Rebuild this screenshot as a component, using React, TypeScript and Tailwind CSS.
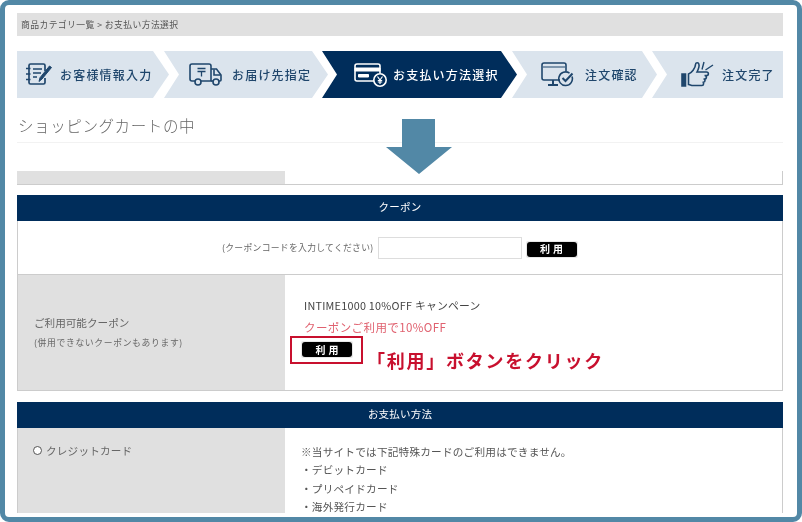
import React from 'react';

const navy = '#002d5b';

const NoteIcon = () => (
  <svg width="28" height="26" viewBox="0 0 28 26" fill="none" stroke="currentColor" strokeWidth="1.7" className="shrink-0">
    <path d="M20 9V3.500a1.500 1.500 0 0 0-1.500-1.500H5.500A1.500 1.500 0 0 0 4 3.500v17A1.500 1.500 0 0 0 5.500 22h13a1.500 1.500 0 0 0 1.500-1.500V16" />
    <path d="M1 6.500h4.500M1 12h4.500M1 17.500h4.500" />
    <path d="M8 7h9M8 11h8M8 15h4" />
    <path d="M26.500 5.500 17 17l-3 2.500 1-3.800L24.500 4z" fill="currentColor" strokeWidth="1" />
  </svg>
);

const TruckIcon = () => (
  <svg width="34" height="24" viewBox="0 0 34 24" fill="none" stroke="currentColor" strokeWidth="1.6" className="shrink-0">
    <path d="M6 18H3a2 2 0 0 1-2-2V3a2 2 0 0 1 2-2h17a2 2 0 0 1 2 2v15H12" />
    <path d="M22 6h5.500l4.500 6v5a1 1 0 0 1-1 1h-1M24 18h-2" />
    <path d="M25 6.500v5.500h6.500" />
    <path d="M8.500 5.500h8M8.500 8.500h8M12.500 8.500v5" strokeWidth="1.300" />
    <circle cx="9" cy="19" r="3" />
    <circle cx="27" cy="19" r="3" />
  </svg>
);

const CardIcon = () => (
  <svg width="34" height="24" viewBox="0 0 34 24" fill="none" stroke="currentColor" strokeWidth="1.600" className="shrink-0">
    <path d="M21 18H3a2 2 0 0 1-2-2V3a2 2 0 0 1 2-2h21a2 2 0 0 1 2 2v7" />
    <path d="M1 5h25v3H1z" fill="currentColor" strokeWidth="1" />
    <path d="M4.500 11.500h10v2.500h-10z" fill="currentColor" strokeWidth="1" />
    <circle cx="26" cy="17" r="6.200" fill={navy} />
    <path d="M23.500 13.500 26 17l2.500-3.500M26 17v4M23.800 17.500h4.400M23.800 19h4.400" strokeWidth="1.200" />
  </svg>
);

const MonitorIcon = () => (
  <svg width="33" height="25" viewBox="0 0 33 25" fill="none" stroke="currentColor" strokeWidth="1.600" className="shrink-0">
    <path d="M19 18H3a2 2 0 0 1-2-2V3a2 2 0 0 1 2-2h20a2 2 0 0 1 2 2v6" />
    <path d="M2 5h22" strokeWidth="1" />
    <path d="M12 18v4M7 23h10" strokeWidth="2" />
    <path d="M31 14.500a6.800 6.800 0 1 1-2.500-3.300" />
    <path d="m21.500 16 3 3 7-7.500" strokeWidth="2" />
  </svg>
);

const ThumbIcon = () => (
  <svg width="33" height="29" viewBox="0 0 33 29" fill="none" stroke="currentColor" strokeWidth="1.600" className="shrink-0">
    <path d="M1 14h3.500v12H1z" fill="currentColor" />
    <path d="M7.500 14c3-1 7-6 7-9.500 0-2 3-2.500 3.500 0 .5 2.200-1 5.500-2 7.500h9.500c2.500 0 2.500 3.500 0 3.500h-2c2.500 0 2.500 3.500 0 3.500h-1c2 0 2 3.200 0 3.200h-1c1.500 0 1.500 3.300-.5 3.300H12c-2 0-3-1-4.500-1z" />
    <path d="M21 9.500 23 2M24.500 10 32 5" strokeWidth="1.400" />
  </svg>
);

const steps = [
  { label: 'お客様情報入力', icon: <NoteIcon />, cls: 'w-[152px] pl-[8px] gap-[7px] [clip-path:polygon(0_0,136px_0,152px_50%,136px_100%,0_100%)]' },
  { label: 'お届け先指定', icon: <TruckIcon />, cls: 'w-[164px] -ml-[5px] pl-[25px] gap-[9px] [clip-path:polygon(0_0,148px_0,164px_50%,148px_100%,0_100%,15px_50%)]' },
  { label: 'お支払い方法選択', icon: <CardIcon />, active: true, cls: 'w-[195px] -ml-[6px] pl-[32px] gap-[5px] [clip-path:polygon(0_0,179px_0,195px_50%,179px_100%,0_100%,15px_50%)]' },
  { label: '注文確認', icon: <MonitorIcon />, cls: 'w-[145px] -ml-[5px] pl-[29px] gap-[11px] [clip-path:polygon(0_0,130px_0,145px_50%,130px_100%,0_100%,15px_50%)]' },
  { label: '注文完了', icon: <ThumbIcon />, cls: 'w-[131px] -ml-[5px] pl-[29px] gap-[8px] [clip-path:polygon(0_0,100%_0,100%_100%,0_100%,15px_50%)]' },
];

const UseButton = () => (
  <button className="block w-[52px] h-[17px] p-px bg-[#e8e8e8] rounded-[2px] shrink-0">
    <span className="flex items-center justify-center w-full h-full bg-black rounded-[3px] text-white text-[10px] font-bold tracking-[3px] leading-none pl-[3px]">利用</span>
  </button>
);

const SectionHead = ({ children }: { children: React.ReactNode }) => (
  <div className="h-[26px] pb-[2px] bg-[#002d5b] flex items-center justify-center text-white text-[10.5px] tracking-[0.2px]">{children}</div>
);

export default function App() {
  return (
    <div className="w-[802px] h-[522px] bg-white overflow-hidden font-['Noto_Sans_CJK_JP','Liberation_Sans',sans-serif]">
      <div className="relative h-full rounded-[9px] border-[5px] border-[#5288a6] pt-[8px] pb-[4px] pl-[12px] pr-[14px] text-[#555]">
        <div className="h-full overflow-hidden blur-[0.3px]">
          <div className="h-[23px] bg-[#e0e0e0] flex items-center pl-[4px] text-[8.8px] tracking-[0.42px] text-[#555]">商品カテゴリ一覧 &gt; お支払い方法選択</div>

          <div className="flex mt-[15px] h-[47px]">
            {steps.map(s => (
              <div
                key={s.label}
                className={`flex items-center shrink-0 ${s.cls} ${s.active ? 'bg-[#002d5b] text-white' : 'bg-[#dbe4ed] text-[#1f466c]'}`}
              >
                {s.icon}
                <span className="text-[12px] font-medium tracking-[1.2px] whitespace-nowrap">{s.label}</span>
              </div>
            ))}
          </div>

          <div className="h-[45px] flex items-end pb-[5px] pl-px border-b border-[#f2f2f2] text-[15.500px] font-light tracking-[0.6px] text-[#666] leading-[24px]">ショッピングカートの中</div>

          <div className="flex h-[14px] mt-[28px] border-b border-r border-[#ccc]">
            <div className="w-[268px] bg-[#e0e0e0]" />
          </div>

          <div className="mt-[10px]">
            <SectionHead>クーポン</SectionHead>
            <div className="h-[54px] border-x border-b border-[#ccc] flex items-center gap-[4px] pl-[204px] text-[8.800px] tracking-[0.3px] text-[#666]">
              <span>(クーポンコードを入力してください)</span>
              <input className="w-[144px] h-[22px] border border-[#ddd] bg-white" />
              <div className="mt-[3px]"><UseButton /></div>
            </div>
            <div className="flex h-[116px] border-x border-b border-[#ccc]">
              <div className="w-[267px] bg-[#e0e0e0] flex flex-col justify-center pl-[16px] pb-[1px]">
                <p className="text-[10.600px] leading-[16px] text-[#666]">ご利用可能クーポン</p>
                <p className="text-[8.800px] leading-[14px] mt-[5px] tracking-[0.65px] text-[#666]">(併用できないクーポンもあります)</p>
              </div>
              <div className="relative pl-[19px] pt-[21px]">
                <p className="text-[10.800px] leading-[18px] tracking-[0.25px] text-[#444]">INTIME1000 10%OFF キャンペーン</p>
                <p className="text-[11.500px] leading-[18px] mt-[4px] tracking-[0.4px] text-[#e0616f]">クーポンご利用で10%OFF</p>
                <div className="mt-[5px] ml-[-3px]"><UseButton /></div>
                <div className="absolute left-[5px] top-[61px] w-[73px] h-[28px] border-2 border-[#c8102e]" />
                <span className="absolute left-[82px] top-[72px] whitespace-nowrap text-[18px] font-bold tracking-[1.750px] leading-[26px] text-[#c8102e]">「利用」ボタンをクリック</span>
              </div>
            </div>
          </div>

          <div className="mt-[11px]">
            <SectionHead>お支払い方法</SectionHead>
            <div className="flex h-[120px] border-x border-[#ccc]">
              <div className="w-[267px] bg-[#e0e0e0] flex items-start gap-[4px] pl-[15px] pt-[14px] text-[10.600px] tracking-[0.2px] leading-[18px] text-[#666]">
                <span className="w-[9px] h-[9px] mt-[4px] rounded-full border border-[#555] bg-white shrink-0" />
                <span>クレジットカード</span>
              </div>
              <div className="pl-[16px] pt-[15px] text-[10.650px] tracking-[0.2px] leading-[18.400px] text-[#555]">
                <p>※当サイトでは下記特殊カードのご利用はできません。</p>
                <p>・デビットカード</p>
                <p>・プリペイドカード</p>
                <p className="mt-[3px] leading-[12px]">・海外発行カード</p>
              </div>
            </div>
          </div>
        </div>

        <svg width="66" height="55" viewBox="0 0 66 55" className="absolute left-[381px] top-[114px]">
          <path d="M16 0h33v28h17L33 55 0 28h16z" fill="#5288a6" />
        </svg>
      </div>
    </div>
  );
}
